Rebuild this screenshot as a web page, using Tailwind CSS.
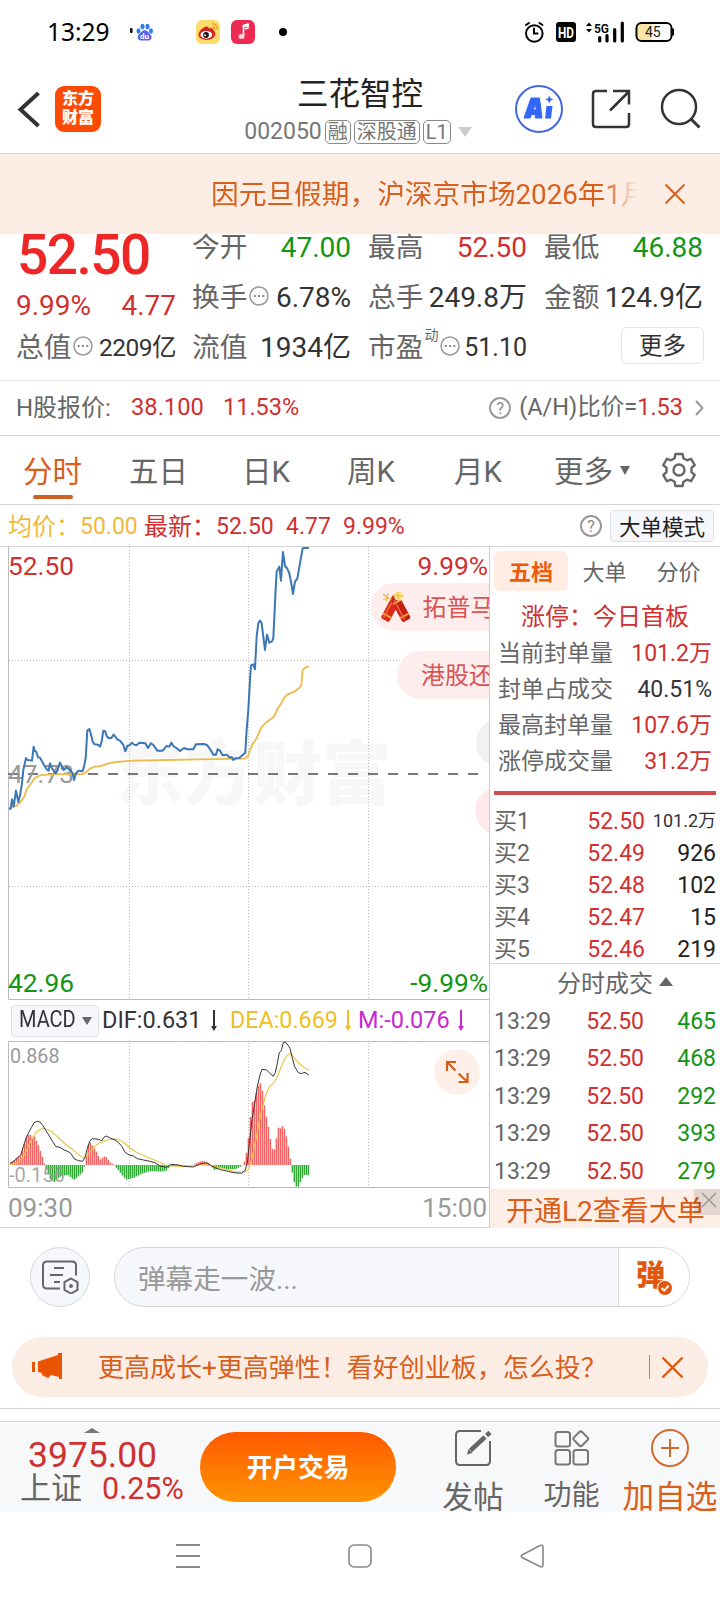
<!DOCTYPE html>
<html lang="zh-CN">
<head>
    <meta charset="UTF-8">
    <meta name="viewport" content="width=device-width, initial-scale=1.0">
    <title>三花智控 002050</title>
    <script src="https://cdn.jsdelivr.net/npm/@tailwindcss/browser@4"></script>
    <style>body { font-family: Roboto, 'Noto Sans CJK SC', sans-serif; }</style>
</head>
<body class="w-[720px] h-[1600px] overflow-hidden bg-white text-[#333] whitespace-nowrap">
    <!-- status bar -->
    <div class="h-16 flex items-center justify-between pl-[47px] pr-[45px]">
        <div class="flex items-center">
            <span class="w-[83px] text-[24.5px] leading-none text-black font-['Noto_Sans']">13:29</span>
            <svg width="160" height="30" viewBox="130 17 160 30">
                <rect x="130" y="28" width="2.6" height="5" rx="1" fill="#111"/>
                <g fill="#2f7be8">
                    <ellipse cx="138.500" cy="31" rx="2" ry="2.700"/><ellipse cx="142.500" cy="26.500" rx="2" ry="2.800"/>
                    <ellipse cx="147.500" cy="26.500" rx="2" ry="2.800"/><ellipse cx="151" cy="31" rx="2" ry="2.700"/>
                </g>
                <path d="M144.700 30c2.500 0 3.500 2.500 5.300 4 3 2.500 1.500 6.500-1.500 6.500h-7.500c-3.500 0-4.500-4-1.600-6.500 1.800-1.500 2.800-4 5.300-4z" fill="#5a63ee"/>
                <text x="140" y="39" font-size="8" font-weight="700" fill="#fff">du</text>
                <rect x="196" y="20" width="24" height="24" rx="6" fill="#fbdc69"/>
                <path d="M198.500 35c0-4 5-8.500 8.500-8.500 1.500 0 2 1 1.700 2.300 3-1 5-.5 4.600 1.800 2 .8 2.200 2 2 4-.5 3-4.200 5.300-8.600 5.300s-8.200-2-8.200-4.900z" fill="#d8201f"/>
                <ellipse cx="206.300" cy="34.800" rx="5.800" ry="3.900" fill="#fff"/><circle cx="206" cy="35" r="2.900" fill="#111"/><circle cx="205" cy="35.300" r="1" fill="#fff"/>
                <path d="M212 24c3.500-.5 6 2.500 5.300 5.800M212.500 27c1.500 0 2.500 1 2.200 2.600" stroke="#e8962a" stroke-width="1.300" fill="none"/>
                <rect x="231" y="20" width="24" height="24" rx="6" fill="#ec2a52"/>
                <path d="M243.500 36v-10.500l4.500-1.500v4l-3 1" fill="none" stroke="#fff" stroke-width="1.600"/><path d="M242.700 28l6-2v-2.500l-6 1.500z" fill="#fff"/><ellipse cx="241.500" cy="36.500" rx="3" ry="2.500" fill="#fbd3da"/>
                <circle cx="283" cy="32" r="4" fill="#000"/>
            </svg>
        </div>
        <svg width="151" height="30" viewBox="524 17 151 30">
            <g fill="none" stroke="#000" stroke-width="2" stroke-linecap="round">
                <circle cx="534.300" cy="33.500" r="8.300"/><path d="M534 28.500v5h3.500M526 25l3-2M542.500 25l-3-2"/>
            </g>
            <rect x="556" y="22" width="20" height="20" rx="3" fill="#000"/>
            <text x="558" y="37.500" font-size="15" font-weight="700" fill="#fff" textLength="16" lengthAdjust="spacingAndGlyphs">HD</text>
            <path d="M586 26l3-3.500 3 3.500zM586 29l3 3.500 3-3.500z" fill="#000"/>
            <text x="594" y="32.500" font-size="12.500" font-weight="600" fill="#000" textLength="15" lengthAdjust="spacingAndGlyphs">5G</text>
            <path d="M599.700 37.500v3.500M607 35.500v5.500M614.700 29.500v11.500M622.300 23v18" stroke="#000" stroke-width="3.200" stroke-linecap="round"/>
            <rect x="638" y="24" width="14" height="16" fill="#fbe6a6"/>
            <rect x="636.500" y="23" width="35" height="18" rx="5" fill="none" stroke="#000" stroke-width="2"/>
            <path d="M673 28.500v7" stroke="#000" stroke-width="2"/>
            <text x="645" y="37" font-size="14" fill="#222">45</text>
        </svg>
    </div>

    <!-- header -->
    <header class="h-[90px] flex justify-between border-b border-[#d4d4d4]">
        <div class="flex items-start pl-[17px] pt-[22px] w-[207px]">
            <svg class="mt-1.5" width="24" height="36" viewBox="17 92 24 36"><path d="M38.500 93 20.500 109.500 38.500 126" fill="none" stroke="#333" stroke-width="4"/></svg>
            <div class="ml-3.5 w-[46px] h-[46px] rounded-[9px] bg-[#fe4a02] text-white text-[16px] leading-[19px] font-black text-center pt-[3px]">东方<br>财富</div>
        </div>
        <div class="w-[270px] pt-[12px] text-center">
            <h1 class="text-[31.500px] leading-[37px] text-[#222]">三花智控</h1>
            <div class="mt-[6px] -ml-1 flex items-center justify-center gap-[3px] text-[20px] text-[#777]">
                <span class="text-[23px] leading-[26px]">002050</span>
                <span class="h-6 px-[2px] border border-[#888] rounded-[5px] leading-[23px]">融</span>
                <span class="h-6 px-[2px] border border-[#888] rounded-[5px] leading-[23px]">深股通</span>
                <span class="h-6 px-[2px] border border-[#888] rounded-[5px] leading-[23px]">L1</span>
                <span class="ml-1 w-0 h-0 border-x-[7px] border-x-transparent border-t-[10px] border-t-[#ccc]"></span>
            </div>
        </div>
        <svg class="mr-[17px]" width="190" height="89" viewBox="513 64 190 89" fill="none" stroke="#333" stroke-width="2.500">
            <circle cx="539" cy="109" r="23" stroke="#4169dc" stroke-width="2"/>
            <path d="M531 98h8.500l2.500 20h-6.500l-.3-3.500h-3.700l-1.500 3.500h-6zM535.800 104.500l-2.800 5.500h3z" fill="#3366f6" fill-rule="evenodd" stroke="#3366f6" stroke-width="1" stroke-linejoin="round"/>
            <path d="M546.500 106h6l-1.500 12.500h-6z" fill="#3366f6" stroke="none"/>
            <path d="M549.300 95.500l1.200 2.800 2.800 1.200-2.800 1.200-1.200 2.800-1.200-2.800-2.800-1.200 2.800-1.200z" fill="#3366f6" stroke="none"/>
            <path d="M607 91h-11q-3 0-3 3v30q0 3 3 3h30q3 0 3-3v-11M613 91h16v13.500M610 110.500l19-19"/>
            <circle cx="679" cy="107" r="17"/><path d="M691 119l8.500 8.500" stroke-width="3"/>
        </svg>
    </header>

    <!-- notice -->
    <div class="h-20 flex items-center bg-[#fcede4] pl-[211px] text-[27.700px] text-[#d95f1c]">
        <div class="w-[426px] overflow-hidden leading-[40px] pt-[2px] mask-r-from-[92%]">因元旦假期，沪深京市场2026年1月</div>
        <svg class="ml-[28px]" width="20" height="20" viewBox="0 0 20 20"><path d="M.5.500l19 19M19.500.500l-19 19" stroke="#d95f1c" stroke-width="2"/></svg>
    </div>

    <!-- quote -->
    <section class="h-[147px] flex border-b border-[#eaeaea] text-[28px] leading-[27px] text-[#333]">
        <div class="w-[176px] pl-4">
            <div class="pl-[1px] text-[55px] leading-[43px] font-medium tracking-[-1.500px] text-[#ef2626]">52.50</div>
            <div class="mt-[15px] flex justify-between text-[28px] text-[#d03030]"><span>9.99%</span><span>4.77</span></div>
            <div class="mt-[15px] flex items-center justify-between">
                <span class="flex items-center text-[27.700px] text-[#666]">总值<svg class="ml-[2px] mb-1" width="20" height="20" viewBox="0 0 20 20"><use href="#dots"/></svg></span>
                <span class="text-[24.500px] tracking-[-.5px]">2209亿</span>
            </div>
        </div>
        <div class="w-[175px] pl-[16px] grid grid-rows-3 h-[127px] gap-y-[23px]">
            <div class="flex justify-between"><span class="text-[27.700px] text-[#666]">今开</span><span class="text-[#149414]">47.00</span></div>
            <div class="flex justify-between"><span class="flex items-center text-[27.700px] text-[#666]">换手<svg class="ml-[2px] mb-1" width="20" height="20" viewBox="0 0 20 20"><use href="#dots"/></svg></span><span>6.78%</span></div>
            <div class="flex justify-between"><span class="text-[27.700px] text-[#666]">流值</span><span>1934亿</span></div>
        </div>
        <div class="w-[176px] pl-[17px] grid grid-rows-3 h-[127px] gap-y-[23px]">
            <div class="flex justify-between"><span class="text-[27.700px] text-[#666]">最高</span><span class="text-[#d03030]">52.50</span></div>
            <div class="flex justify-between"><span class="text-[27.700px] text-[#666]">总手</span><span>249.8万</span></div>
            <div class="flex justify-between"><span class="flex items-center text-[27.700px] text-[#666]">市盈<span class="ml-px text-[14px] mb-6">动</span><svg class="ml-[2px] mb-1" width="20" height="20" viewBox="0 0 20 20"><use href="#dots"/></svg></span><span class="text-[25px]">51.10</span></div>
        </div>
        <div class="w-[176px] pl-[17px] grid grid-rows-3 h-[127px] gap-y-[23px]">
            <div class="flex justify-between"><span class="text-[27.700px] text-[#666]">最低</span><span class="text-[#149414]">46.88</span></div>
            <div class="flex justify-between"><span class="text-[27.700px] text-[#666]">金额</span><span>124.9亿</span></div>
            <div class="flex justify-end items-center"><button class="-mr-px w-[83px] h-[37px] shrink-0 -my-2 -translate-y-[2px] border-[1.500px] border-[#e4e4e4] rounded-md text-[23.500px] leading-[34px]">更多</button></div>
        </div>
    </section>
    <svg class="hidden">
        <g id="dots"><circle cx="10" cy="10" r="9" fill="none" stroke="#999" stroke-width="1.500"/><path d="M4.700 10h2M9 10h2M13.300 10h2" stroke="#888" stroke-width="2"/></g>
    </svg>

    <!-- H share -->
    <div class="h-[55px] flex items-center border-b border-[#d4d4d4] px-4 text-[24px] text-[#666]">
        <span class="w-[115px]">H股报价:</span>
        <span class="w-[92px] text-[23.700px] text-[#d03030]">38.100</span>
        <span class="text-[23.500px] text-[#d03030]">11.53%</span>
        <span class="ml-auto mr-2 w-[22px] h-[22px] rounded-full border-2 border-[#999] text-[16px] leading-[19px] text-center text-[#888]">?</span>
        <span class="text-[23.500px]">(A/H)比价=<span class="text-[#d03030]">1.53</span></span>
        <svg class="ml-[12px]" width="9" height="16" viewBox="0 0 9 16"><path d="M1 1l6.500 7L1 15" fill="none" stroke="#999" stroke-width="2"/></svg>
    </div>

    <!-- period tabs -->
    <nav class="h-[69px] flex items-center border-b border-[#d4d4d4] pl-[23px] text-[29.500px] leading-[66px] text-[#666]">
        <div class="w-[106px] h-full text-[#d95f1c]">
            <div class="h-[59px] pt-[3px]">分时</div>
            <div class="ml-[10px] w-10 h-1 rounded-full bg-[#cf6022]"></div>
        </div>
        <span class="w-[113px] pt-1">五日</span>
        <span class="w-[105px] pt-1">日K</span>
        <span class="w-[107px] pt-1">周K</span>
        <span class="w-[100px] pt-1">月K</span>
        <span class="w-[66px] pt-1">更多</span>
        <span class="w-0 h-0 border-x-[5px] border-x-transparent border-t-[9px] border-t-[#666]"></span>
        <svg class="ml-[31px]" width="36" height="36" viewBox="-18 -18 36 36" fill="none" stroke="#666" stroke-width="2.400">
            <path stroke-linejoin="round" d="M-3.600-16h7.200l.8 4.200 3.600 2.100 4.100-1.500 3.600 6.200-3.200 2.800v4.400l3.200 2.800-3.600 6.200-4.100-1.500-3.600 2.100-.8 4.200h-7.200l-.8-4.200-3.600-2.100-4.100 1.500-3.600-6.200 3.200-2.800v-4.400l-3.200-2.800 3.600-6.200 4.100 1.500 3.600-2.100z"/>
            <circle r="5.500"/>
        </svg>
    </nav>
    <div class="h-[42px] flex items-center border-b border-[#d4d4d4] pl-2 pr-1.5 text-[23px] text-[#d03030]">
        <span class="w-[72px] pt-[3px] text-[#f0b93e] text-[24px]">均价：</span>
        <span class="w-[64px] pt-[3px] text-[#f0b93e]">50.00</span>
        <span class="w-[72px] pt-[3px] text-[24px]">最新：</span>
        <span class="w-[70px] pt-[3px]">52.50</span><span class="w-[57px] pt-[3px]">4.77</span><span class="pt-[3px]">9.99%</span>
        <span class="ml-auto mr-2 w-[22px] h-[22px] rounded-full border-2 border-[#999] text-[16px] leading-[19px] text-center text-[#888]">?</span>
        <span class="w-[104px] h-8 rounded border-[1.500px] border-[#dcdfe3] bg-[#f6f7fa] text-center text-[21.500px] leading-[33px] text-[#222]">大单模式</span>
    </div>

    <main class="h-[681px] flex border-b border-[#d4d4d4]">
        <div class="w-[490px] border-r border-[#ccc]">
            <!-- intraday chart -->
            <svg class="block" width="489" height="453" viewBox="0 547 489 453">
                <text x="115" y="799" font-size="69" font-weight="900" fill="#f7f7f7">东方财富</text>
                <g fill="none" stroke="#bbb" stroke-dasharray="1 2">
                    <path d="M129.500 547v452M248.500 547v452M368.500 547v452M9 660.500h480M9 886.500h480"/>
                </g>
                <path d="M8.500 547v452.500H489" fill="none" stroke="#bbb"/>
                <path d="M8 774h472" stroke="#777" stroke-width="1.800" stroke-dasharray="10 10"/>
                <g font-size="26.300">
                    <text x="8" y="575" fill="#d03030">52.50</text>
                    <text x="488" y="575" fill="#d03030" text-anchor="end">9.99%</text>
                    <text x="8" y="783" fill="#999">47.73</text>
                    <text x="8" y="992" fill="#149414">42.96</text>
                    <text x="488" y="992" fill="#149414" text-anchor="end">-9.99%</text>
                </g>
                <g transform="translate(0 430) scale(.3333)" fill="none" stroke-linejoin="round">
                    <path stroke="#edbb4b" stroke-width="5.500" d="M28 1134L48 1128 60 1118 72 1102 80 1078 92 1062 104 1045 120 1036 150 1033 250 1032 260 1025 270 1016 285 1010 305 1008 325 1000 350 996 400 992 500 990 600 988 735 986 744 978 750 960 758 942 770 925 784 892 800 876 822 860 832 838 842 823 852 804 862 794 885 784 900 772 904 765 908 720 916 713 927 709"/>
                    <path stroke="#3b76b5" stroke-width="6" d="M27 1136h5L36 1108 41 1130 48 1082 55 1116 60 1096 66 1060 70 1020 78 984 82 990 96 992 101 950 104 962 109 966 114 982 120 983 132 1005 140 1018 146 1022 150 1000 156 1015 166 1030 172 1022 180 998 186 1010 191 1020 200 1012 212 1022 218 1030 222 1050 228 1030 236 1022 248 1024 252 1010 257 985 262 902 268 897 272 910 278 935 284 943 294 944 300 950 305 935 310 902 315 903 320 918 326 924 334 924 341 914 346 920 352 928 360 932 370 945 376 964 382 948 390 945 396 938 402 944 410 946 418 938 436 940 444 954 453 940 460 945 472 962 488 962 500 948 508 950 514 938 520 948 532 956 540 963 552 954 562 958 580 958 588 943 612 942 622 946 632 960 640 974 648 974 653 958 660 962 668 976 680 974 688 982 696 982 700 990 706 985 718 984 728 975 736 968 740 900 745 840 750 750 753 706 760 703 765 718 770 620 775 580 780 572 785 580 790 620 795 660 801 614 808 638 816 634 820 625 826 500 830 425 838 410 843 452 849 366 855 408 862 416 868 430 873 455 879 492 885 455 892 446 900 400 908 355 927 353"/>
                </g>
                <!-- bullet comments -->
                <g opacity=".92">
                    <rect x="370.500" y="583" width="180" height="48" rx="24" fill="#fdecec"/>
                    <rect x="397" y="651" width="180" height="48" rx="24" fill="#fdecec"/>
                    <rect x="476" y="719" width="100" height="48" rx="24" fill="#f0f0f0"/>
                    <rect x="475" y="787" width="100" height="48" rx="24" fill="#fde9e9"/>
                </g>
                <g transform="translate(396 608)">
                    <g transform="rotate(28)"><rect x="-9" y="-10" width="9.500" height="26" rx="2" fill="#d92a18"/><path d="M-9-5h9.500M-9 11h9.500" stroke="#f2a838" stroke-width="2"/><path d="M-6.500-8v22" stroke="#f06a45" stroke-width="1.500"/></g>
                    <g transform="rotate(-28)"><rect x="-1" y="-10" width="9.500" height="26" rx="2" fill="#c81f14"/><path d="M-1-5h9.500M-1 11h9.500" stroke="#f2a838" stroke-width="2"/><path d="M2-8v22" stroke="#f06a45" stroke-width="1.500"/></g>
                    <circle cx="2.500" cy="-12" r="4.500" fill="#fbe58c"/><path d="M-13-14l5 4M-8-15l-2 8M-13-9l7-1M-3-13l11 1M2-16v7" stroke="#efb53d" stroke-width="1.200"/>
                </g>
                <text x="422.500" y="616" font-size="24" fill="#d75555">拓普马</text>
                <text x="421" y="684" font-size="24" fill="#d75555">港股还</text>
            </svg>

            <!-- macd legend -->
            <div class="h-[41px] flex items-center pl-[11px] text-[23px] text-[#333]">
                <div class="w-[88px] h-8 flex items-center rounded border-[1.500px] border-[#dcdfe3] bg-[#f6f7fa] pl-[7px]">
                    <span class="w-[63px] origin-left scale-x-[.87]">MACD</span>
                    <span class="w-0 h-0 border-x-[5px] border-x-transparent border-t-[8px] border-t-[#666]"></span>
                </div>
                <span class="ml-[3px] w-[107px] text-[23.500px]">DIF:0.631</span>
                <svg width="10" height="22" viewBox="0 0 10 22"><path d="M5 0v17" stroke="#333" stroke-width="2"/><path d="M2 16h6l-3 5z" fill="#333"/></svg>
                <span class="ml-[11px] w-[113px] text-[23.300px] text-[#edbf25]">DEA:0.669</span>
                <svg width="10" height="22" viewBox="0 0 10 22"><path d="M5 0v17" stroke="#edbf25" stroke-width="2"/><path d="M2 16h6l-3 5z" fill="#edbf25"/></svg>
                <span class="ml-[5px] w-[98px] text-[23.500px] text-[#c928cf]">M:-0.076</span>
                <svg width="10" height="22" viewBox="0 0 10 22"><path d="M5 0v17" stroke="#c928cf" stroke-width="2"/><path d="M2 16h6l-3 5z" fill="#c928cf"/></svg>
            </div>

            <!-- macd chart -->
            <svg class="block" width="489" height="147" viewBox="0 1041 489 147">
                <path d="M129.500 1043v144M248.500 1043v144M368.500 1043v144" stroke="#bbb" stroke-dasharray="1 2"/>
                <path d="M489 1041.500H8.500v146H489" fill="none" stroke="#bbb"/>
                <g id="macd-bars" transform="translate(0 960) scale(.3333)"></g>
                <text x="10" y="1063" font-size="19.700" fill="#999">0.868</text>
                <text x="9" y="1182" font-size="20" fill="#999" fill-opacity=".85">-0.156</text>
                <g transform="translate(0 960) scale(.3333)" fill="none" stroke-linejoin="round">
                    <path stroke="#edc443" stroke-width="3.500" d="M30 614C55 612 65 600 80 570 95 535 110 505 132 506 160 508 175 540 215 566 230 580 245 595 256 592 275 570 280 558 300 548 320 538 340 535 358 540 375 545 385 565 410 577 440 592 470 600 495 615 520 620 560 620 600 615 640 612 660 625 700 634 730 638 740 635 746 628 760 590 770 520 780 475 790 430 795 400 808 382 818 370 824 370 832 350 845 320 855 282 872 281 888 295 895 318 927 330"/>
                    <path stroke="#333" stroke-width="3" d="M30 610L38 606 46 600 54 592 62 586 70 560 78 535 86 518 94 503 102 488 112 484 120 486 128 496 138 512 148 528 158 545 168 560 180 562 192 570 205 575 214 582 222 596 235 602 248 604 256 590 262 565 270 542 278 536 295 538 305 542 312 532 320 528 330 534 345 540 356 548 366 560 376 578 388 585 400 588 412 596 430 600 450 604 465 608 480 618 500 622 512 613 535 615 550 619 580 621 600 612 620 608 635 618 650 625 665 630 680 633 700 638 725 640 735 632 742 610 748 550 756 480 764 430 772 380 780 345 786 328 800 330 810 340 820 349 826 338 832 310 838 278 844 272 850 248 856 246 864 256 870 265 876 290 884 320 895 338 904 341 915 337 927 346"/>
                </g>
                <circle cx="457" cy="1072" r="23" fill="#fef0e9"/>
                <path d="M456 1062h-9v9M447 1062l8.500 8.500M467.500 1073v9h-9M467.500 1082l-9-8.500" fill="none" stroke="#d26018" stroke-width="2.200"/>
            </svg>
            <div class="flex justify-between pl-2 pr-[2px] text-[26px] leading-[41px] text-[#999]"><span>09:30</span><span>15:00</span></div>
        </div>

        <!-- order book -->
        <aside class="w-[230px] text-[23px] text-[#666]">
            <div class="flex h-[46px] pt-1 pl-1 text-[22px] leading-[43px]">
                <span class="w-[74px] h-10 rounded-md bg-[#ffede4] text-center font-bold text-[#ea5c0c]">五档</span>
                <span class="w-[73px] text-center">大单</span>
                <span class="w-[75px] text-center">分价</span>
            </div>
            <div class="h-[44px] mt-[3px] pl-[31px] text-[24px] leading-[43px] text-[#d03030]">涨停：今日首板</div>
            <div class="pl-2 pr-[8px] leading-[36px] -mt-1">
                <div class="flex justify-between"><span>当前封单量</span><span class="text-[#d03030]">101.2万</span></div>
                <div class="flex justify-between"><span>封单占成交</span><span class="text-[#333]">40.51%</span></div>
                <div class="flex justify-between"><span>最高封单量</span><span class="text-[#d03030]">107.6万</span></div>
                <div class="flex justify-between"><span>涨停成交量</span><span class="text-[#d03030]">31.2万</span></div>
            </div>
            <div class="mx-1 mt-[11px] h-1 bg-[#cb4f4d]"></div>
            <div class="h-[169px] pt-[11px] pl-1 pr-1 leading-[32px] border-b border-[#d4d4d4]">
                <div class="flex"><span class="w-[70px]">买1</span><span class="w-[81px] text-right text-[#d03030]">52.50</span><span class="flex-1 text-right text-[#333] text-[18px] leading-[29px]">101.2万</span></div>
                <div class="flex"><span class="w-[70px]">买2</span><span class="w-[81px] text-right text-[#d03030]">52.49</span><span class="flex-1 text-right text-[#222]">926</span></div>
                <div class="flex"><span class="w-[70px]">买3</span><span class="w-[81px] text-right text-[#d03030]">52.48</span><span class="flex-1 text-right text-[#222]">102</span></div>
                <div class="flex"><span class="w-[70px]">买4</span><span class="w-[81px] text-right text-[#d03030]">52.47</span><span class="flex-1 text-right text-[#222]">15</span></div>
                <div class="flex"><span class="w-[70px]">买5</span><span class="w-[81px] text-right text-[#d03030]">52.46</span><span class="flex-1 text-right text-[#222]">219</span></div>
            </div>
            <div class="h-[39px] flex items-center pl-[67px] text-[24px] leading-[38px]">分时成交<span class="ml-[6px] mb-1 w-0 h-0 border-x-[7px] border-x-transparent border-b-[9px] border-b-[#666]"></span></div>
            <div class="h-[185.500px] pl-1 pr-1 leading-[37.400px]">
                <div class="flex"><span class="w-[70px]">13:29</span><span class="w-[80px] text-right text-[#d03030]">52.50</span><span class="flex-1 text-right text-[#149414]">465</span></div>
                <div class="flex"><span class="w-[70px]">13:29</span><span class="w-[80px] text-right text-[#d03030]">52.50</span><span class="flex-1 text-right text-[#149414]">468</span></div>
                <div class="flex"><span class="w-[70px]">13:29</span><span class="w-[80px] text-right text-[#d03030]">52.50</span><span class="flex-1 text-right text-[#149414]">292</span></div>
                <div class="flex"><span class="w-[70px]">13:29</span><span class="w-[80px] text-right text-[#d03030]">52.50</span><span class="flex-1 text-right text-[#149414]">393</span></div>
                <div class="flex"><span class="w-[70px]">13:29</span><span class="w-[80px] text-right text-[#d03030]">52.50</span><span class="flex-1 text-right text-[#149414]">279</span></div>
            </div>
            <div class="relative h-[39px] bg-[#fdefe7] pl-4 text-[28px] leading-[45px] text-[#da5d18]">开通L2查看大单
                <div class="absolute right-0 top-0 w-[26px] h-[26px] bg-black/10 pt-[3px] pl-[7px]">
                    <svg width="16" height="16" viewBox="0 0 16 16"><path d="M1 1l14 14M15 1L1 15" stroke="#999" stroke-width="1.500"/></svg>
                </div>
            </div>
        </aside>
    </main>

    <!-- bullet comment input -->
    <div class="flex items-center mt-[19px] pl-[30px] h-[60px]">
        <div class="w-[60px] h-[60px] rounded-full border border-[#d5d8dc] bg-[#f6f7fa] flex items-center justify-center">
            <svg width="38" height="34" viewBox="42 1261 38 34" fill="none" stroke="#666" stroke-width="2">
                <path d="M61 1289.500h-13q-4 0-4-4v-19q0-4 4-4h25q4 0 4 4v10"/><path d="M55 1269h10M51 1276h13M55 1283h6"/>
                <path d="M72 1279.500l6.500 3.700v7.600l-6.500 3.700-6.500-3.700v-7.600z"/><circle cx="72" cy="1287" r="1" fill="#666"/>
            </svg>
        </div>
        <div class="ml-6 w-[576px] h-[60px] flex rounded-full border border-[#d5d8dc] bg-[#f6f7fa] overflow-hidden">
            <div class="w-[504px] pl-[23px] text-[27.600px] leading-[63px] text-[#999] border-r border-[#d5d8dc]">弹幕走一波...</div>
            <div class="relative flex-1 bg-white pl-[17px] text-[29px] leading-[57px] font-black text-[#e2570f]">弹
                <svg class="absolute left-[38px] top-[32px]" width="16" height="16" viewBox="0 0 16 16"><circle cx="8" cy="8" r="7.500" fill="#e2570f" stroke="#fff"/><path d="M4.500 8l2.700 2.700 4.500-5" fill="none" stroke="#fff" stroke-width="1.800"/></svg>
            </div>
        </div>
    </div>

    <div class="mt-[30px] mx-3 h-[60px] flex items-center rounded-full bg-[#fcede4] pl-5 text-[26px] text-[#d95f1c]">
        <svg width="30" height="28" viewBox="0 0 30 28" fill="#e85404"><path d="M0 9h3v10H0zM6 8.500L26 2V0h4v26h-3v-2l-8-2-3 3-6-3v-2l-4-1z"/></svg>
        <span class="ml-[36px] pt-[2px]">更高成长+更高弹性！看好创业板，怎么投？</span>
        <span class="ml-auto w-px h-6 bg-[#d08050]"></span>
        <svg class="ml-3 mr-[25px]" width="21" height="21" viewBox="0 0 21 21"><path d="M.500.500l20 20M20.500.500l-20 20" stroke="#d95f1c" stroke-width="2.300"/></svg>
    </div>
    <div class="mt-[11px] h-[13px] border-t border-[#d4d4d4]"></div>

    <!-- bottom bar -->
    <footer class="h-[91px] flex border-t border-[#d4d4d4] bg-[#f7f8fa] text-[#666]">
        <div class="w-[200px]">
            <div class="pt-[6px] pl-[84px]"><span class="block w-0 h-0 border-x-[8px] border-x-transparent border-b-[5px] border-b-[#777]"></span></div>
            <div class="pl-7 mt-[5px] text-[35.500px] leading-[34px] text-[#d03030]">3975.00</div>
            <div class="pl-5 flex items-center leading-[34px]"><span class="w-[82px] text-[31px]">上证</span><span class="text-[30.500px] text-[#d03030]">0.25%</span></div>
        </div>
        <div class="mt-[10px] w-[196px] h-[70px] rounded-full bg-linear-to-b from-[#ff5800] to-[#ff9200] text-center text-[25.700px] leading-[73px] font-bold text-white">开户交易</div>
        <div class="ml-[27px] w-[100px] pt-[7px] flex flex-col items-center">
            <svg class="shrink-0" width="38" height="38" viewBox="0 0 38 38" fill="none" stroke="#666" stroke-width="2">
                <path d="M27 2H6Q2 2 2 6v26q0 4 4 4h26q4 0 4-4V12"/><path d="M16.500 21.500L31 8" stroke-width="4.500"/><path d="M13 25.500l1.500-5.500 4 4z" fill="#666" stroke="none"/><path d="M32.500 6.500l3.500-3" stroke-width="4.500"/>
            </svg>
            <span class="mt-[10px] shrink-0 text-[30.700px] leading-[42px]">发帖</span>
        </div>
        <div class="w-[97px] pt-[7px] flex flex-col items-center">
            <svg class="shrink-0" width="36" height="37" viewBox="0 0 36 37" fill="none" stroke="#777" stroke-width="2">
                <rect x="1.500" y="3" width="14.500" height="14.500" rx="2.500"/><rect x="1.500" y="21" width="14.500" height="14.500" rx="2.500"/><rect x="19.500" y="21" width="14.500" height="14.500" rx="2.500"/><rect x="21" y="4" width="11.500" height="11.500" rx="2" transform="rotate(45 26.750 9.750)"/>
            </svg>
            <span class="mt-[9px] shrink-0 text-[28px] leading-[42px]">功能</span>
        </div>
        <div class="w-[100px] pt-[7px] flex flex-col items-center text-[#d95f1c]">
            <svg class="shrink-0" width="38" height="38" viewBox="0 0 38 38" fill="none" stroke="#d26a30" stroke-width="2"><circle cx="19" cy="19" r="18"/><path d="M10 19h18M19 10v18"/></svg>
            <span class="mt-[10px] shrink-0 text-[31.700px] leading-[42px]">加自选</span>
        </div>
    </footer>

    <!-- system navigation -->
    <div class="h-[88px] flex items-center justify-between pl-[176px] pr-[176px]">
        <svg width="24" height="26" viewBox="0 0 24 26"><path d="M0 2h24M0 13h24M0 24h24" stroke="#888" stroke-width="1.800"/></svg>
        <svg width="24" height="24" viewBox="0 0 24 24"><rect x="1" y="1" width="22" height="22" rx="5" fill="none" stroke="#888" stroke-width="1.600"/></svg>
        <svg width="24" height="24" viewBox="0 0 24 24"><path d="M2 11L20 1.500q3-1 3 2v17q0 3-3 2L2 13.500q-1.500-1.300 0-2.500z" fill="none" stroke="#888" stroke-width="1.600"/></svg>
    </div>

    <script>
        // [x, height] control points of the MACD histogram, negative values are drawn below the zero line
        const points = [[30,4],[42,14],[48,22],[60,24],[66,38],[72,60],[78,82],[84,90],[90,92],[96,80],[102,88],[108,75],[114,62],[120,45],[126,28],[132,8],[138,-12],[150,-40],[162,-52],[174,-40],[186,-32],[204,-30],[216,-40],[222,-45],[234,-35],[246,-25],[252,-10],[258,22],[264,60],[270,68],[276,60],[288,42],[300,16],[312,26],[318,25],[330,8],[342,0],[354,-14],[366,-30],[378,-44],[402,-38],[426,-26],[450,-18],[480,-20],[498,-18],[510,-4],[580,0],[594,8],[606,12],[624,8],[636,-6],[642,-15],[660,-9],[684,-13],[708,-12],[726,-2],[732,6],[738,30],[744,70],[750,135],[756,188],[765,195],[771,228],[780,248],[786,230],[795,165],[804,120],[813,66],[819,40],[825,50],[831,95],[837,120],[843,105],[849,122],[855,102],[861,78],[867,44],[873,6],[879,-38],[885,-58],[891,-68],[897,-64],[903,-46],[909,-36],[915,-27],[921,-31],[930,-31]];
        const bars = document.getElementById('macd-bars');
        for (let x = 31; x < 930; x += 6) {
            const i = Math.max(1, points.findIndex(p => p[0] >= x));
            const [x0, h0] = points[i - 1];
            const [x1, h1] = points[i];
            const h = h0 + (h1 - h0) * (x - x0) / (x1 - x0);
            const rect = document.createElementNS('http://www.w3.org/2000/svg', 'rect');
            rect.setAttribute('x', x - 2);
            rect.setAttribute('y', h > 0 ? 615 - h : 615);
            rect.setAttribute('width', 4.6);
            rect.setAttribute('height', Math.abs(h));
            rect.setAttribute('fill', h > 0 ? '#ee6464' : '#35a83a');
            bars.appendChild(rect);
        }
    </script>
</body>
</html>
